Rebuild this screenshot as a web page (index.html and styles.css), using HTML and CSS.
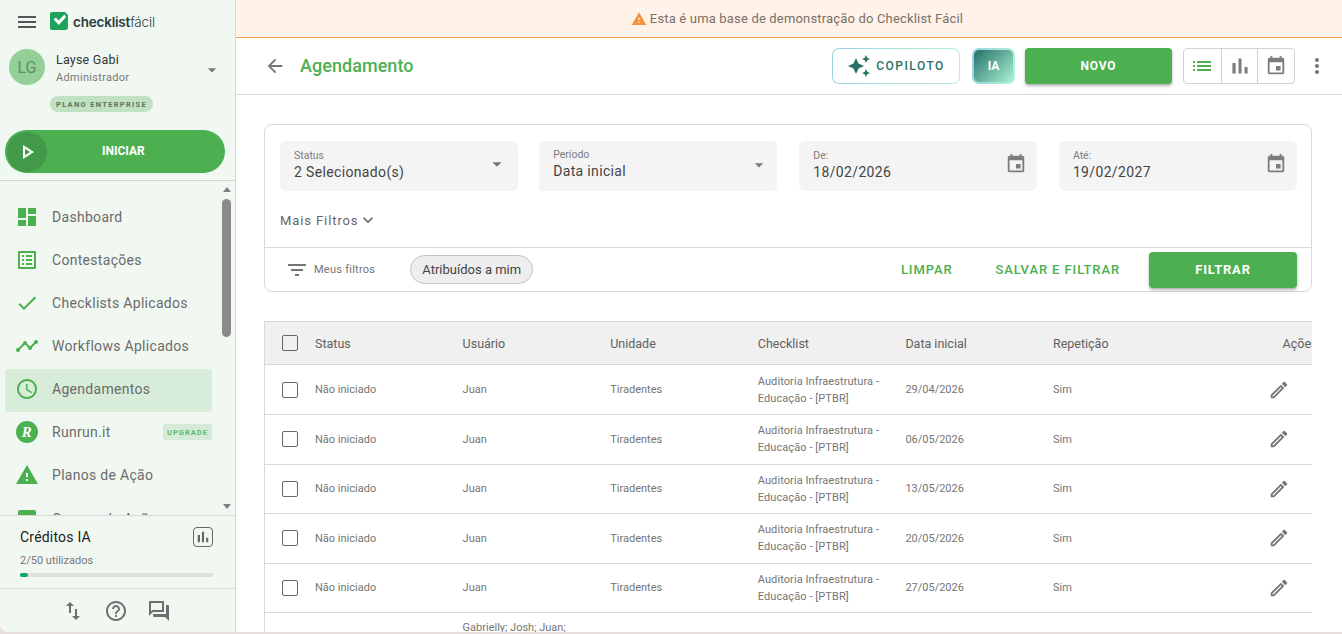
FILE: index.html
```html
<!DOCTYPE html>
<html lang="pt-BR">
<head>
    <meta charset="UTF-8">
    <title>Agendamento - Checklist Fácil</title>
    <link rel="stylesheet" href="styles.css">
</head>
<body>
    <div class="app">
        <aside class="sidebar">
            <div class="side-top">
                <div class="brand">
                    <svg class="icon menu-icon" viewBox="0 0 24 24"><path d="M3 18h18v-2H3v2zm0-5h18v-2H3v2zm0-7v2h18V6H3z"/></svg>
                    <svg class="logo" viewBox="0 0 18 19"><path fill="#1fa35c" d="M2 0h13l3 3v12a3 3 0 0 1-3 3H2a2 2 0 0 1-2-2V2a2 2 0 0 1 2-2z"/><path fill="#fff" d="M3.600 7.400l2.400-2 2.600 3L14.400 2.600l1.700 2.400-7.300 8z"/></svg>
                    <span class="brand-name"><b>checklist</b>fácil</span>
                </div>
                <div class="user">
                    <div class="avatar">LG</div>
                    <div class="user-info">
                        <div class="user-name">Layse Gabi</div>
                        <div class="user-role">Administrador</div>
                    </div>
                    <svg class="icon user-caret" viewBox="0 0 24 24"><path d="M7 10l5 5 5-5z"/></svg>
                </div>
                <div class="plan">PLANO ENTERPRISE</div>
                <button class="start-btn">
                    <span class="start-circle"><svg class="icon" viewBox="0 0 24 24"><path d="M10 8.640L15.270 12 10 15.360V8.640M8 5v14l11-7L8 5z"/></svg></span>
                    <span class="start-label">INICIAR</span>
                </button>
            </div>

            <div class="side-nav">
                <nav class="nav-list">
                    <a class="nav-item"><svg class="icon" viewBox="0 0 24 24"><path d="M3 13h8V3H3v10zm0 8h8v-6H3v6zm10 0h8V11h-8v10zm0-18v6h8V3h-8z"/></svg>Dashboard</a>
                    <a class="nav-item"><svg class="icon" viewBox="0 0 24 24"><path d="M19 5v14H5V5h14m1.100-2H3.900c-.5 0-.9.4-.9.9v16.200c0 .4.4.9.9.9h16.200c.4 0 .9-.5.9-.9V3.900c0-.5-.5-.9-.9-.9zM11 7h6v2h-6V7zm0 4h6v2h-6v-2zm0 4h6v2h-6zM7 7h2v2H7zm0 4h2v2H7zm0 4h2v2H7z"/></svg>Contestações</a>
                    <a class="nav-item"><svg class="icon" viewBox="0 0 24 24"><path d="M9 16.170L4.830 12l-1.420 1.410L9 19 21 7l-1.410-1.410z"/></svg>Checklists Aplicados</a>
                    <a class="nav-item"><svg class="icon" viewBox="0 0 24 24"><path d="M23 8c0 1.100-.9 2-2 2-.18 0-.35-.02-.51-.07l-3.560 3.550c.05.16.07.34.07.52 0 1.100-.9 2-2 2s-2-.9-2-2c0-.18.02-.36.07-.52l-2.550-2.550c-.16.05-.34.07-.52.07s-.36-.02-.52-.07l-4.550 4.560c.05.16.07.33.07.51 0 1.100-.9 2-2 2s-2-.9-2-2 .9-2 2-2c.18 0 .35.02.51.07l4.560-4.550C8.020 9.360 8 9.180 8 9c0-1.100.9-2 2-2s2 .9 2 2c0 .18-.02.36-.07.52l2.550 2.550c.16-.05.34-.07.52-.07s.36.02.52.07l3.550-3.560C19.020 8.350 19 8.180 19 8c0-1.100.9-2 2-2s2 .9 2 2z"/></svg>Workflows Aplicados</a>
                    <a class="nav-item active"><svg class="icon" viewBox="0 0 24 24"><path d="M11.990 2C6.470 2 2 6.480 2 12s4.470 10 9.990 10C17.520 22 22 17.520 22 12S17.520 2 11.990 2zM12 20c-4.420 0-8-3.580-8-8s3.580-8 8-8 8 3.580 8 8-3.580 8-8 8zm.5-13H11v6l5.250 3.150.75-1.230-4.500-2.670z"/></svg>Agendamentos</a>
                    <a class="nav-item"><span class="runrun">R</span>Runrun.it<span class="upgrade">UPGRADE</span></a>
                    <a class="nav-item"><svg class="icon" viewBox="0 0 24 24"><path d="M1 21h22L12 2 1 21zm12-3h-2v-2h2v2zm0-4h-2v-4h2v4z"/></svg>Planos de Ação</a>
                    <a class="nav-item"><svg class="icon" viewBox="0 0 24 24"><path d="M19 3H5c-1.100 0-2 .9-2 2v14c0 1.100.9 2 2 2h14c1.100 0 2-.9 2-2V5c0-1.100-.9-2-2-2z"/></svg>Causas de Ação</a>
                </nav>
                <div class="scrollbar">
                    <span class="scroll-up"></span>
                    <span class="scroll-thumb"></span>
                    <span class="scroll-down"></span>
                </div>
            </div>

            <div class="credits">
                <div class="credits-head">
                    <span>Créditos IA</span>
                    <span class="credits-btn"><svg class="icon" viewBox="0 0 24 24"><path d="M5 9.200h3V19H5zM10.600 5h2.800v14h-2.800zm5.600 8H19v6h-2.800z"/></svg></span>
                </div>
                <div class="credits-used">2/50 utilizados</div>
                <div class="credits-bar"><div class="credits-fill" style="width: 4%"></div></div>
            </div>

            <div class="side-foot">
                <svg class="icon" viewBox="0 0 24 24"><path d="M16 17.010V10h-2v7.010h-3L15 21l4-3.990h-3zM9 3L5 6.990h3V14h2V6.990h3L9 3z"/></svg>
                <svg class="icon" viewBox="0 0 24 24"><path d="M11 18h2v-2h-2v2zm1-16C6.480 2 2 6.480 2 12s4.480 10 10 10 10-4.480 10-10S17.520 2 12 2zm0 18c-4.410 0-8-3.590-8-8s3.590-8 8-8 8 3.590 8 8-3.590 8-8 8zm0-14c-2.210 0-4 1.790-4 4h2c0-1.100.9-2 2-2s2 .9 2 2c0 2-3 1.750-3 5h2c0-2.250 3-2.500 3-5 0-2.210-1.790-4-4-4z"/></svg>
                <svg class="icon" viewBox="0 0 24 24"><path d="M15 4v7H5.170L4 12.170V4h11m1-2H3c-.55 0-1 .45-1 1v14l4-4h10c.55 0 1-.45 1-1V3c0-.55-.45-1-1-1zm5 4h-2v9H6v2c0 .55.45 1 1 1h11l4 4V7c0-.55-.45-1-1-1z"/></svg>
            </div>
        </aside>

        <main class="main">
            <div class="banner">
                <svg class="icon" viewBox="0 0 24 24"><path d="M1 21h22L12 2 1 21zm12-3h-2v-2h2v2zm0-4h-2v-4h2v4z"/></svg>
                <span>Esta é uma base de demonstração do Checklist Fácil</span>
            </div>

            <header class="page-head">
                <svg class="icon back-icon" viewBox="0 0 24 24"><path d="M20 11H7.830l5.590-5.590L12 4l-8 8 8 8 1.410-1.410L7.830 13H20v-2z"/></svg>
                <h1>Agendamento</h1>
                <div class="head-actions">
                    <button class="copilot-btn"><svg class="icon" viewBox="0 0 24 24"><path d="M19 9l1.250-2.750L23 5l-2.750-1.250L19 1l-1.250 2.750L15 5l2.750 1.250L19 9zm-7.500.5L9 4 6.500 9.500 1 12l5.500 2.500L9 20l2.500-5.500L17 12l-5.500-2.500zM19 15l-1.250 2.750L15 19l2.750 1.250L19 23l1.250-2.750L23 19l-2.750-1.250L19 15z"/></svg>COPILOTO</button>
                    <button class="ia-btn">IA</button>
                    <button class="btn-green new-btn">NOVO</button>
                    <div class="view-toggle">
                        <span class="view-item selected"><svg class="icon" viewBox="0 0 24 24"><path d="M3 13h2v-2H3v2zm0 4h2v-2H3v2zm0-8h2V7H3v2zm4 4h14v-2H7v2zm0 4h14v-2H7v2zM7 7v2h14V7H7z"/></svg></span>
                        <span class="view-item"><svg class="icon icon-bars" viewBox="0 0 24 24"><path d="M5 9.200h3V19H5zM10.600 5h2.800v14h-2.800zm5.600 8H19v6h-2.800z"/></svg></span>
                        <span class="view-item"><svg class="icon icon-cal" viewBox="0 0 24 24"><path d="M17 12h-5v5h5v-5zM16 1v2H8V1H6v2H5c-1.110 0-1.990.9-1.990 2L3 19c0 1.100.89 2 2 2h14c1.100 0 2-.9 2-2V5c0-1.100-.9-2-2-2h-1V1h-2zm3 18H5V8h14v11z"/></svg></span>
                    </div>
                    <svg class="icon more-icon" viewBox="0 0 24 24"><path d="M12 8c1.100 0 2-.9 2-2s-.9-2-2-2-2 .9-2 2 .9 2 2 2zm0 2c-1.100 0-2 .9-2 2s.9 2 2 2 2-.9 2-2-.9-2-2-2zm0 6c-1.100 0-2 .9-2 2s.9 2 2 2 2-.9 2-2-.9-2-2-2z"/></svg>
                </div>
            </header>

            <div class="content">
                <section class="filter-card">
                    <div class="filter-top">
                        <div class="filter-fields">
                            <div class="field">
                                <div class="field-text"><label>Status</label><div class="field-value">2 Selecionado(s)</div></div>
                                <svg class="icon field-caret" viewBox="0 0 24 24"><path d="M7 10l5 5 5-5z"/></svg>
                            </div>
                            <div class="field field-period">
                                <div class="field-text"><label>Período</label><div class="field-value">Data inicial</div></div>
                                <svg class="icon field-caret" viewBox="0 0 24 24"><path d="M7 10l5 5 5-5z"/></svg>
                            </div>
                            <div class="field">
                                <div class="field-text"><label>De:</label><div class="field-value">18/02/2026</div></div>
                                <svg class="icon field-date" viewBox="0 0 24 24"><path d="M17 12h-5v5h5v-5zM16 1v2H8V1H6v2H5c-1.110 0-1.990.9-1.990 2L3 19c0 1.100.89 2 2 2h14c1.100 0 2-.9 2-2V5c0-1.100-.9-2-2-2h-1V1h-2zm3 18H5V8h14v11z"/></svg>
                            </div>
                            <div class="field">
                                <div class="field-text"><label>Até:</label><div class="field-value">19/02/2027</div></div>
                                <svg class="icon field-date" viewBox="0 0 24 24"><path d="M17 12h-5v5h5v-5zM16 1v2H8V1H6v2H5c-1.110 0-1.990.9-1.990 2L3 19c0 1.100.89 2 2 2h14c1.100 0 2-.9 2-2V5c0-1.100-.9-2-2-2h-1V1h-2zm3 18H5V8h14v11z"/></svg>
                            </div>
                        </div>
                        <div class="more-filters">Mais Filtros <svg class="icon" viewBox="0 0 24 24"><path d="M16.590 8.590L12 13.170 7.410 8.590 6 10l6 6 6-6z"/></svg></div>
                    </div>
                    <div class="filter-bottom">
                        <svg class="icon filter-icon" viewBox="0 0 24 24"><path d="M10 18h4v-2h-4v2zM3 6v2h18V6H3zm3 7h12v-2H6v2z"/></svg>
                        <span class="my-filters">Meus filtros</span>
                        <span class="chip">Atribuídos a mim</span>
                        <button class="btn-text btn-clear">LIMPAR</button>
                        <button class="btn-text btn-save">SALVAR E FILTRAR</button>
                        <button class="btn-green filter-btn">FILTRAR</button>
                    </div>
                </section>

                <section class="table">
                    <div class="row row-head">
                        <span class="check"></span>
                        <span>Status</span><span>Usuário</span><span>Unidade</span><span>Checklist</span><span>Data inicial</span><span>Repetição</span>
                        <span class="actions-title">Ações</span>
                    </div>
                    <div class="row">
                        <span class="check"></span>
                        <span>Não iniciado</span><span>Juan</span><span>Tiradentes</span>
                        <span class="checklist-name">Auditoria Infraestrutura - Educação - [PTBR]</span>
                        <span>29/04/2026</span><span>Sim</span>
                        <svg class="icon edit-icon" viewBox="0 0 24 24"><path d="M14.060 9.020l.92.92L5.920 19H5v-.92l9.060-9.060M17.660 3c-.25 0-.51.1-.7.29l-1.830 1.830 3.750 3.750 1.830-1.830c.39-.39.39-1.020 0-1.410l-2.340-2.340c-.2-.2-.45-.29-.71-.29zm-3.600 3.190L3 17.250V21h3.750L17.810 9.940l-3.750-3.750z"/></svg>
                    </div>
                    <div class="row">
                        <span class="check"></span>
                        <span>Não iniciado</span><span>Juan</span><span>Tiradentes</span>
                        <span class="checklist-name">Auditoria Infraestrutura - Educação - [PTBR]</span>
                        <span>06/05/2026</span><span>Sim</span>
                        <svg class="icon edit-icon" viewBox="0 0 24 24"><path d="M14.060 9.020l.92.92L5.920 19H5v-.92l9.060-9.060M17.660 3c-.25 0-.51.1-.7.29l-1.830 1.830 3.750 3.750 1.830-1.830c.39-.39.39-1.020 0-1.410l-2.340-2.340c-.2-.2-.45-.29-.71-.29zm-3.600 3.190L3 17.250V21h3.750L17.810 9.940l-3.750-3.750z"/></svg>
                    </div>
                    <div class="row">
                        <span class="check"></span>
                        <span>Não iniciado</span><span>Juan</span><span>Tiradentes</span>
                        <span class="checklist-name">Auditoria Infraestrutura - Educação - [PTBR]</span>
                        <span>13/05/2026</span><span>Sim</span>
                        <svg class="icon edit-icon" viewBox="0 0 24 24"><path d="M14.060 9.020l.92.92L5.920 19H5v-.92l9.060-9.060M17.660 3c-.25 0-.51.1-.7.29l-1.830 1.830 3.750 3.750 1.830-1.830c.39-.39.39-1.020 0-1.410l-2.340-2.340c-.2-.2-.45-.29-.71-.29zm-3.600 3.190L3 17.250V21h3.750L17.810 9.940l-3.750-3.750z"/></svg>
                    </div>
                    <div class="row">
                        <span class="check"></span>
                        <span>Não iniciado</span><span>Juan</span><span>Tiradentes</span>
                        <span class="checklist-name">Auditoria Infraestrutura - Educação - [PTBR]</span>
                        <span>20/05/2026</span><span>Sim</span>
                        <svg class="icon edit-icon" viewBox="0 0 24 24"><path d="M14.060 9.020l.92.92L5.920 19H5v-.92l9.060-9.060M17.660 3c-.25 0-.51.1-.7.29l-1.830 1.830 3.750 3.750 1.830-1.830c.39-.39.39-1.020 0-1.410l-2.340-2.340c-.2-.2-.45-.29-.71-.29zm-3.600 3.190L3 17.250V21h3.750L17.810 9.940l-3.750-3.750z"/></svg>
                    </div>
                    <div class="row">
                        <span class="check"></span>
                        <span>Não iniciado</span><span>Juan</span><span>Tiradentes</span>
                        <span class="checklist-name">Auditoria Infraestrutura - Educação - [PTBR]</span>
                        <span>27/05/2026</span><span>Sim</span>
                        <svg class="icon edit-icon" viewBox="0 0 24 24"><path d="M14.060 9.020l.92.92L5.920 19H5v-.92l9.060-9.060M17.660 3c-.25 0-.51.1-.7.29l-1.830 1.830 3.750 3.750 1.830-1.830c.39-.39.39-1.020 0-1.410l-2.340-2.340c-.2-.2-.45-.29-.71-.29zm-3.600 3.190L3 17.250V21h3.750L17.810 9.940l-3.750-3.750z"/></svg>
                    </div>
                    <div class="row row-last">
                        <span></span><span></span>
                        <span>Gabrielly; Josh; Juan;</span>
                    </div>
                </section>
            </div>
        </main>
    </div>
</body>
</html>
```

FILE: styles.css
```css
* {
    margin: 0;
    padding: 0;
    box-sizing: border-box;
    font-family: 'Roboto', 'Liberation Sans', sans-serif;
}

html, body {
    height: 100%;
    overflow: hidden;
}

body {
    background-color: #e9dcdc;
}

button {
    border: none;
    background: none;
    cursor: pointer;
}

.icon {
    display: block;
    width: 24px;
    height: 24px;
    flex: none;
    fill: currentColor;
}

.app {
    display: flex;
    height: 632px;
    overflow: hidden;
    background-color: #fff;
    border-bottom-left-radius: 8px;
}

/* barra lateral */
.sidebar {
    display: flex;
    flex-direction: column;
    flex: none;
    width: 236px;
    background-color: #f1f8f2;
    border-right: 1px solid #d9d9d9;
}

.side-top {
    flex: none;
    height: 181px;
    padding: 0 0 0 5px;
    border-bottom: 1px solid #d6d6d6;
}

.brand {
    display: flex;
    align-items: center;
    height: 43px;
}

.menu-icon {
    margin-left: 10px;
    color: #555;
}

.logo {
    width: 18px;
    height: 19px;
    margin-left: 11px;
    flex: none;
}

.brand-name {
    margin-left: 5px;
    font-family: 'Inter', sans-serif;
    font-size: 13.500px;
    font-weight: 300;
    color: #2b3a3a;
    letter-spacing: -0.2px;
}

.brand-name b {
    font-family: 'Inter', sans-serif;
    font-weight: 600;
}

.user {
    display: flex;
    align-items: center;
    height: 36px;
    margin-top: 6px;
    padding-left: 4px;
}

.avatar {
    display: flex;
    align-items: center;
    justify-content: center;
    width: 36px;
    height: 36px;
    border-radius: 50%;
    background-color: #93cf96;
    color: #5e8f62;
    font-size: 16px;
}

.user-info {
    margin-left: 11px;
    padding-top: 2px;
    flex: 1;
}

.user-name {
    font-size: 12.500px;
    color: #333;
    letter-spacing: 0.2px;
}

.user-role {
    margin-top: 4px;
    font-size: 11px;
    color: #777;
    letter-spacing: 0.3px;
}

.user-caret {
    width: 20px;
    height: 20px;
    margin-right: 13px;
    margin-top: 6px;
    color: #777;
}

.plan {
    display: flex;
    align-items: center;
    justify-content: center;
    width: 103px;
    height: 16px;
    margin: 11px 0 0 45px;
    border-radius: 8px;
    background-color: #c0e2c3;
    color: #5b7560;
    font-size: 7.500px;
    font-weight: 700;
    letter-spacing: 1.300px;
}

.start-btn {
    display: flex;
    align-items: center;
    width: 220px;
    height: 43px;
    margin-top: 18px;
    padding-left: 2px;
    border-radius: 22px;
    background-color: #4caf50;
}

.start-circle {
    display: flex;
    align-items: center;
    justify-content: center;
    width: 40px;
    height: 40px;
    border-radius: 50%;
    background-color: #43994a;
    color: #fff;
}

.start-label {
    margin-left: 55px;
    margin-bottom: 2px;
    color: #fff;
    font-size: 12px;
    font-weight: 700;
}

.side-nav {
    display: flex;
    flex: none;
    height: 335px;
    overflow: hidden;
    border-bottom: 1px solid #d9d9d9;
}

.nav-list {
    flex: 1;
    padding: 15px 0 0 5px;
    min-width: 0;
}

.nav-item {
    display: flex;
    align-items: center;
    height: 43.150px;
    padding: 0 0 2px 10px;
    border-radius: 4px;
    color: #6b6b6b;
    font-size: 14px;
    letter-spacing: 0.300px;
}

.nav-item .icon {
    margin-right: 13px;
    color: #4caf50;
}

.nav-item.active {
    background-color: #d7ecd9;
}

.runrun {
    display: flex;
    align-items: center;
    justify-content: center;
    width: 22px;
    height: 22px;
    margin: 0 14px 0 1px;
    border-radius: 50%;
    background-color: #4caf50;
    color: #fff;
    font-family: 'Liberation Serif', serif;
    font-size: 15px;
    font-style: italic;
    font-weight: 700;
}

.upgrade {
    display: flex;
    align-items: center;
    justify-content: center;
    width: 49px;
    height: 16px;
    margin-left: auto;
    border-radius: 2px;
    background-color: #d5ebd7;
    color: #5dbb63;
    font-size: 7.500px;
    font-weight: 700;
    letter-spacing: 1px;
}

.scrollbar {
    display: flex;
    flex-direction: column;
    align-items: center;
    flex: none;
    width: 15px;
    margin: 0 1px 0 7px;
    padding: 6px 0 6px;
}

.scroll-up, .scroll-down {
    flex: none;
    width: 0;
    height: 0;
    border-left: 4px solid transparent;
    border-right: 4px solid transparent;
}

.scroll-up {
    border-bottom: 5px solid #7f7f7f;
}

.scroll-down {
    margin-top: auto;
    border-top: 5px solid #7f7f7f;
}

.scroll-thumb {
    width: 9px;
    height: 138px;
    margin-top: 7px;
    border-radius: 5px;
    background-color: #8a8a8a;
}

.credits {
    flex: none;
    height: 73px;
    padding: 11px 22px 0 20px;
    border-bottom: 1px solid #d9d9d9;
}

.credits-head {
    display: flex;
    align-items: center;
    justify-content: space-between;
    color: #222;
    font-size: 14px;
    letter-spacing: 0.200px;
}

.credits-btn {
    display: flex;
    align-items: center;
    justify-content: center;
    width: 20px;
    height: 20px;
    border: 1px solid #666;
    border-radius: 4px;
    color: #666;
}

.credits-btn .icon {
    width: 18px;
    height: 18px;
}

.credits-used {
    margin-top: 7px;
    font-size: 11px;
    color: #777;
}

.credits-bar {
    height: 4px;
    margin-top: 6px;
    border-radius: 2px;
    background-color: #e0e0e0;
}

.credits-fill {
    height: 100%;
    border-radius: 2px;
    background-color: #00a86b;
}

.side-foot {
    display: flex;
    align-items: center;
    flex: 1;
    padding-left: 61px;
    gap: 19px;
    color: #6f6f6f;
}

/* area principal */
.main {
    flex: 1;
    min-width: 0;
}

.banner {
    display: flex;
    align-items: center;
    justify-content: center;
    gap: 3px;
    height: 38px;
    padding-left: 16px;
    background-color: #fff3e9;
    border-bottom: 1px solid #f49b4f;
    color: #7a6f68;
    font-size: 13px;
    letter-spacing: 0.170px;
}

.banner .icon {
    width: 16px;
    height: 16px;
    color: #f9913c;
}

.page-head {
    display: flex;
    align-items: center;
    height: 57px;
    padding-left: 28px;
    border-bottom: 1px solid #d9d9d9;
}

.back-icon {
    width: 22px;
    height: 22px;
    color: #757575;
}

.page-head h1 {
    margin-left: 14px;
    margin-bottom: 2px;
    color: #4caf50;
    font-size: 18px;
    font-weight: 500;
    letter-spacing: 0.050px;
}

.head-actions {
    display: flex;
    align-items: center;
    margin-left: auto;
    padding-right: 13px;
}

.copilot-btn {
    display: flex;
    align-items: center;
    justify-content: center;
    gap: 5px;
    width: 128px;
    height: 36px;
    border: 1px solid transparent;
    border-radius: 7px;
    background: linear-gradient(#fff, #fff) padding-box, linear-gradient(90deg, #98d4e4, #b4f0d4) border-box;
    color: #2a7268;
    font-size: 12px;
    font-weight: 500;
    letter-spacing: 1.500px;
}

.ia-btn {
    width: 43px;
    height: 36px;
    margin-left: 12px;
    border: 2px solid transparent;
    border-radius: 7px;
    background: linear-gradient(135deg, #26706a, #aaf2d2) padding-box, linear-gradient(90deg, #98d4e4, #b4f0d4) border-box;
    color: #fff;
    font-size: 12px;
    font-weight: 700;
}

.btn-green {
    border-radius: 4px;
    background-color: #4caf50;
    color: #fff;
    font-size: 12px;
    font-weight: 700;
    letter-spacing: 0.800px;
    box-shadow: 0 2px 3px rgba(0,0,0,0.3);
}

.new-btn {
    width: 147px;
    height: 36px;
    margin-left: 10px;
}

.view-toggle {
    display: flex;
    margin-left: 11px;
    height: 36px;
    border: 1px solid #d2d2d2;
    border-radius: 4px;
}

.view-item {
    display: flex;
    align-items: center;
    justify-content: center;
    width: 36.670px;
    color: #7d7d7d;
    border-left: 1px solid #d2d2d2;
}

.view-item:first-child {
    border-left: none;
}

.view-item.selected {
    color: #4caf50;
}

.view-item .icon-bars {
    width: 26px;
    height: 26px;
}

.view-item .icon-cal {
    width: 22px;
    height: 22px;
}

.more-icon {
    margin-left: 10px;
    color: #757575;
}

.content {
    padding: 29px 30px 0 28px;
}

.filter-card {
    height: 168px;
    border: 1px solid #d9d9d9;
    border-radius: 8px;
}

.filter-top {
    height: 123px;
    padding: 16px 14px 0 15px;
    border-bottom: 1px solid #d9d9d9;
}

.filter-fields {
    display: grid;
    grid-template-columns: repeat(4, 1fr);
    gap: 21.500px;
}

.field {
    display: flex;
    align-items: flex-start;
    justify-content: space-between;
    height: 50px;
    padding: 8px 10px 0 14px;
    border-radius: 6px;
    background-color: #f4f4f4;
}

.field-period {
    margin: 0 1px 0 -1px;
    padding: 7px 8px 0 14.500px;
    border-radius: 4px;
}

.field label {
    display: block;
    color: #7d7d7d;
    font-size: 10.500px;
}

.field-value {
    margin-top: 2px;
    color: #444;
    font-size: 14px;
    letter-spacing: 0.350px;
}

.field-caret {
    margin-top: 4px;
    width: 22px;
    height: 22px;
    color: #777;
}

.field-period .field-caret {
    width: 20px;
    height: 20px;
    margin-top: 7px;
}

.field-date {
    margin-top: 4px;
    width: 22px;
    height: 22px;
    color: #7d7d7d;
}

.more-filters {
    display: flex;
    align-items: center;
    margin-top: 19px;
    color: #666;
    font-size: 13px;
    letter-spacing: 0.900px;
}

.more-filters .icon {
    width: 20px;
    height: 20px;
}

.filter-bottom {
    display: flex;
    align-items: center;
    height: 43px;
    padding: 0 14px 0 20px;
}

.filter-icon {
    color: #757575;
}

.my-filters {
    margin-left: 5px;
    color: #757575;
    font-size: 11px;
    letter-spacing: 0.250px;
}

.chip {
    display: flex;
    align-items: center;
    justify-content: center;
    width: 123px;
    height: 29px;
    margin-left: 35px;
    border: 1px solid #c4c4c4;
    border-radius: 15px;
    background-color: #eee;
    color: #444;
    font-size: 13px;
}

.btn-text {
    color: #4caf50;
    font-size: 13px;
    font-weight: 500;
    letter-spacing: 0.900px;
}

.btn-clear {
    margin-left: auto;
}

.btn-save {
    margin-left: 43px;
}

.filter-btn {
    width: 148px;
    height: 36px;
    margin-left: 29px;
    font-size: 13px;
}

/* tabela */
.table {
    margin-top: 29px;
    border-left: 1px solid #d9d9d9;
    overflow: hidden;
}

.row {
    display: grid;
    grid-template-columns: 50px repeat(6, 147.600px) 1fr;
    align-items: center;
    height: 49.500px;
    padding-bottom: 1px;
    border-bottom: 1px solid #d9d9d9;
    color: #757575;
    font-size: 11px;
}

.row-head {
    height: 44px;
    margin-bottom: 0.900px;
    padding: 1px 0 0;
    border-top: 1px solid #d9d9d9;
    background-color: #f0f0f0;
    color: #616161;
    font-size: 12.500px;
}

.row-head .check {
    margin-top: -2px;
    background: none;
}

.row-last {
    align-items: start;
    padding-top: 7.500px;
    border-bottom: none;
}

.check {
    display: block;
    width: 16px;
    height: 16px;
    margin-left: 17px;
    border: 1.500px solid #666;
    border-radius: 2px;
    background-color: #fff;
}

.checklist-name {
    padding-right: 15px;
    line-height: 17px;
    letter-spacing: 0.080px;
}

.actions-title {
    padding-left: 82px;
    white-space: nowrap;
}

.edit-icon {
    width: 22px;
    height: 22px;
    margin-left: 67px;
    color: #757575;
}
```
